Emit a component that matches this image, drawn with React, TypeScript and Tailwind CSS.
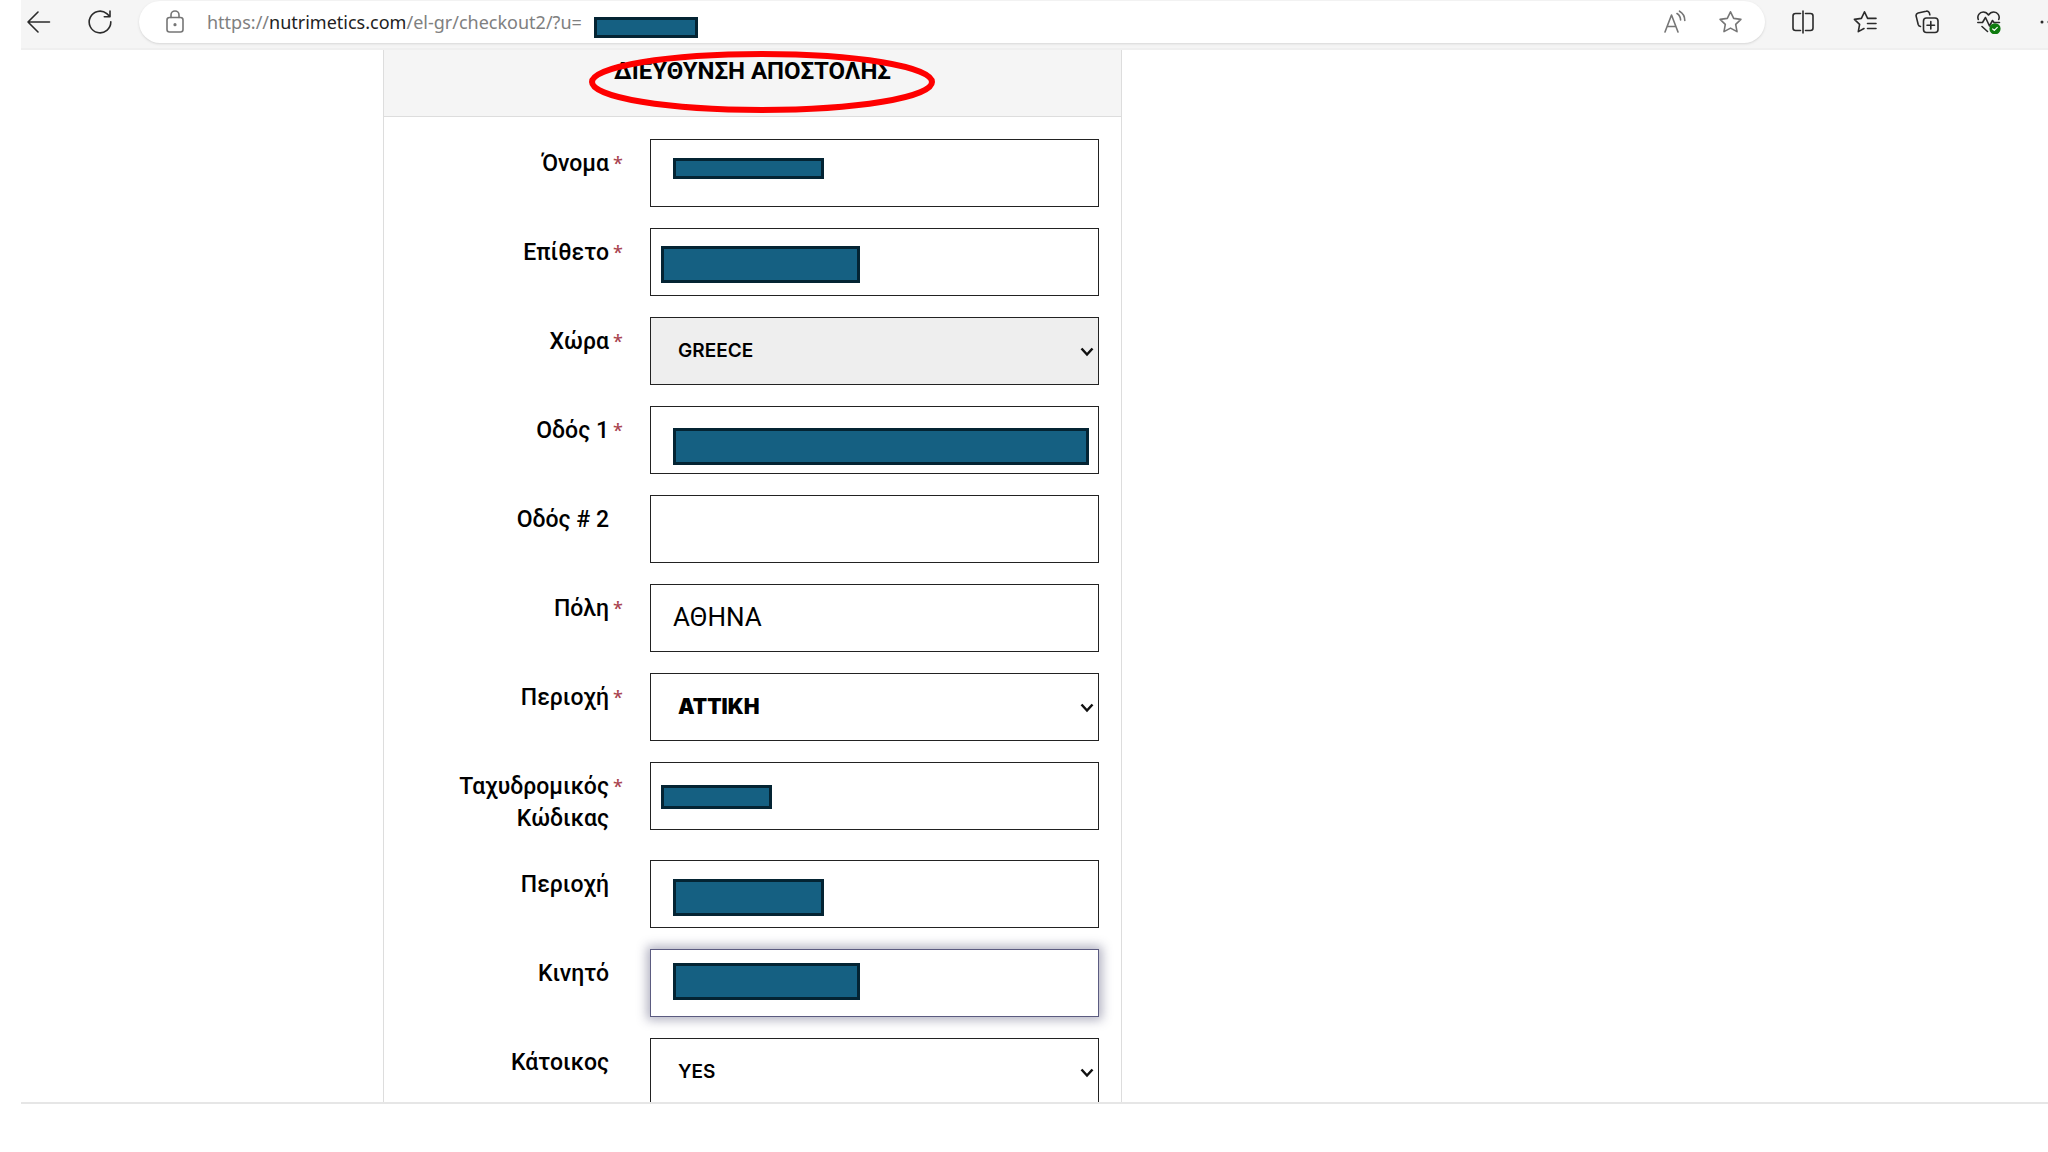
import type { ReactNode } from "react";

type Field = {
  id: string;
  label: string;
  required?: boolean;
  value?: string;
  options?: string[];
  disabled?: boolean;
  focused?: boolean;
  // classes that place and size the cover over a private value
  cover?: string;
  heavy?: boolean;
};

const fields: Field[] = [
  { id: "firstName", label: "Όνομα", required: true, cover: "left-[23px] top-[19px] w-[151px] h-[21px]" },
  { id: "lastName", label: "Επίθετο", required: true, cover: "left-[11px] top-[18px] w-[199px] h-[37px]" },
  { id: "country", label: "Χώρα", required: true, options: ["GREECE"], disabled: true },
  { id: "street1", label: "Οδός 1", required: true, cover: "left-[23px] top-[22px] w-[416px] h-[37px]" },
  { id: "street2", label: "Οδός # 2" },
  { id: "city", label: "Πόλη", required: true, value: "ΑΘΗΝΑ" },
  { id: "region", label: "Περιοχή", required: true, options: ["ΑΤΤΙΚΗ"], heavy: true },
  { id: "postcode", label: "Ταχυδρομικός Κώδικας", required: true, cover: "left-[11px] top-[23px] w-[111px] h-6" },
  { id: "area", label: "Περιοχή", cover: "left-[23px] top-[19px] w-[151px] h-[37px]" },
  { id: "mobile", label: "Κινητό", focused: true, cover: "left-[23px] top-[14px] w-[187px] h-[37px]" },
  { id: "resident", label: "Κάτοικος", options: ["YES"] },
];

const Cover = ({ className }: { className: string }) => (
  <span className={`absolute border-[3px] border-[#042433] bg-[#156082] ${className}`} />
);

const Icon = ({ children, className = "" }: { children: ReactNode; className?: string }) => (
  <svg
    viewBox="0 0 24 24"
    fill="none"
    stroke="currentColor"
    strokeWidth="1.6"
    strokeLinecap="round"
    strokeLinejoin="round"
    className={`size-6 ${className}`}
  >
    {children}
  </svg>
);

const ToolButton = ({ label, children }: { label: string; children: ReactNode }) => (
  <button aria-label={label} className="shrink-0 text-[#2b2b2b]">
    {children}
  </button>
);

const Toolbar = () => (
  <header className="flex h-[50px] shrink-0 items-start overflow-hidden border-b-2 border-[#efefef] bg-[#f5f5f5] pl-[6px]">
    <div className="flex h-11 items-center gap-[37px] pr-[27px]">
      <ToolButton label="Back">
        <Icon>
          <path d="M22.5 12H1M11 2 1 12l10 10" />
        </Icon>
      </ToolButton>
      <ToolButton label="Refresh">
        <Icon>
          <path d="M22.8 11.8A10.8 10.8 0 1 1 18.8 3.6L22 6.6M22 1v5.7h-5.7" />
        </Icon>
      </ToolButton>
    </div>

    <div className="mt-px flex h-[42px] flex-1 items-center rounded-full bg-white pl-6 pr-[23px] text-[#767676] shadow-sm">
      <Icon>
        <rect x="4" y="7.5" width="16" height="14.5" rx="2.5" />
        <path d="M8 7.5V5a4 4 0 0 1 8 0v2.5" />
        <circle cx="12" cy="14.7" r="0.8" fill="currentColor" />
      </Icon>
      <div
        role="textbox"
        aria-label="Address"
        className="relative ml-5 flex-1 whitespace-nowrap font-['Noto_Sans',sans-serif] text-[18px] leading-6 text-[#808080]"
      >
        https://<span className="text-[#222]">nutrimetics.com</span>/el-gr/checkout2/?u=
        <Cover className="left-[387px] top-[7px] h-[21px] w-[104px]" />
      </div>
      <div className="flex items-center gap-[30px]">
        <button aria-label="Read aloud">
          <Icon>
            <path d="M1 22 7.5 5 14 22M3.200 16.500h8.600M13 3.500c2.200 1.400 3.500 3.600 3.600 6.500M15.500 1.200c3.400 2 5.300 5.200 5.300 9.300" />
          </Icon>
        </button>
        <button aria-label="Add to favorites">
          <Icon>
            <path d="m12.500 1.800 3.200 6.600 7.200 1-5.200 5 1.300 7.200-6.500-3.500-6.500 3.500 1.300-7.200-5.200-5 7.200-1z" />
          </Icon>
        </button>
      </div>
    </div>

    <div className="ml-[26px] flex h-11 w-[257px] items-center gap-[38px]">
      <ToolButton label="Split screen">
        <Icon>
          <path d="M9.5 3.5H4.5A2.5 2.5 0 0 0 2 6v12a2.5 2.5 0 0 0 2.5 2.5h5M14.5 3.5h5A2.5 2.5 0 0 1 22 6v12a2.5 2.5 0 0 1-2.5 2.5h-5M12 1v22" />
        </Icon>
      </ToolButton>
      <ToolButton label="Favorites">
        <Icon>
          <path d="M14.6 8.4 11.5 1.8 8.4 8.4l-7 1 5.2 5-1.3 7.2 5.7-3.1M14.6 8.4H23M14.5 13.5H23M14.5 18.5H23" />
        </Icon>
      </ToolButton>
      <ToolButton label="Collections">
        <Icon>
          <rect x="8.5" y="8" width="14.5" height="14.5" rx="3" />
          <path d="M15.8 11.5V19M12 15.2h7.5M5.5 16.5c-1.3-.2-2-.9-2.3-2L1.2 6.4c-.4-1.6.3-2.9 1.9-3.4l8-1.8c1.6-.4 2.8.4 3.3 1.9l.4 1.7" />
        </Icon>
      </ToolButton>
      <ToolButton label="Browser essentials">
        <Icon>
          <path d="M1.3 9.5C-.2 5.800 2.500 2 6.200 2c2.300 0 4 1 5.300 3 1.300-2 3-3 5.300-3 3.700 0 6.500 3.800 4.900 7.500M.8 12.500h4.700l3-5 4 8.500 3-5.500 1.500 2h5.500M5 16.500l5.500 5" />
          <circle cx="18" cy="18.800" r="4.800" fill="#0f7b0f" stroke="#0f7b0f" />
          <path d="m15.700 19 1.600 1.400 3-3" stroke="white" strokeWidth="1.2" />
        </Icon>
      </ToolButton>
      <ToolButton label="More">
        <Icon>
          <path d="M3 12h.01M10 12h.01M17 12h.01" strokeWidth="3" />
        </Icon>
      </ToolButton>
    </div>
  </header>
);

const FormRow = ({ field }: { field: Field }) => {
  const box = field.focused
    ? "border-[#5b5b80] shadow-[0_0_10px_3px_rgba(60,60,100,0.4)]"
    : "border-[#222]";

  return (
    <div className="grid grid-cols-[225px_41px_1fr] pr-[22px]">
      <label
        htmlFor={field.id}
        className="pb-1 pl-10 pt-[9px] text-right font-['Roboto',sans-serif] text-[23px] font-medium leading-8 text-black"
      >
        {field.label}
      </label>
      <span className="pl-1 pt-2 font-['Noto_Sans',sans-serif] text-lg font-medium leading-8 text-[#a94450]">
        {field.required && "*"}
      </span>
      <div className="relative h-[68px]">
        {field.options ? (
          <>
            <select
              id={field.id}
              disabled={field.disabled}
              className={`h-full w-full appearance-none border bg-white pl-[27px] font-['Inter',sans-serif] text-black opacity-100 disabled:bg-[#eee] ${box} ${
                field.heavy ? "text-[21px] font-black" : "text-[19px] font-semibold"
              }`}
            >
              {field.options.map((option) => (
                <option key={option}>{option}</option>
              ))}
            </select>
            <svg
              viewBox="0 0 14 10"
              fill="none"
              stroke="#111"
              strokeWidth="2.5"
              className="pointer-events-none absolute right-[5px] top-[30px] h-[10px] w-[14px]"
            >
              <path d="m1.5 1.5 5.5 6 5.5-6" />
            </svg>
          </>
        ) : (
          <input
            id={field.id}
            defaultValue={field.value}
            className={`h-full w-full border bg-white pb-[2px] pl-[22px] font-['Roboto',sans-serif] text-[26px] text-black outline-none ${box}`}
          />
        )}
        {field.cover && <Cover className={field.cover} />}
      </div>
    </div>
  );
};

const App = () => {
  return (
    <div className="flex h-screen flex-col overflow-hidden bg-white pl-[21px]">
      <Toolbar />

      <main className="min-h-0 flex-1 overflow-hidden">
        <form className="ml-[362px] w-[739px] border-x border-[#ddd]">
          <div className="flex h-[67px] justify-center border-b border-[#ddd] bg-[#f5f5f5] pt-[5px]">
            <h1 className="relative h-8 font-['Roboto',sans-serif] text-2xl font-bold leading-8 text-black">
              ΔΙΕΥΘΥΝΣΗ ΑΠΟΣΤΟΛΗΣ
              <svg
                viewBox="0 0 346 62"
                className="absolute -left-[25px] -top-[4px] h-[62px] w-[346px] max-w-none"
              >
                <ellipse cx="173" cy="31" rx="170" ry="28" fill="none" stroke="#fe0000" strokeWidth="6" />
              </svg>
            </h1>
          </div>
          <div className="flex flex-col gap-[21px] pt-[22px]">
            {fields.map((field) => (
              <FormRow key={field.id} field={field} />
            ))}
          </div>
        </form>
      </main>

      <footer className="h-[50px] shrink-0 border-t-2 border-[#e6e6e6]" />
    </div>
  );
};

export default App;
